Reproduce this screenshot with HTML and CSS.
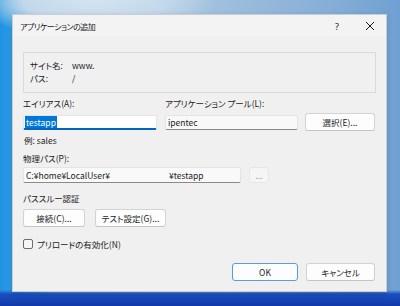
FILE: index.html
```html
<!DOCTYPE html>
<html lang="ja">
<head>
<meta charset="utf-8">
<title>アプリケーションの追加</title>
<link rel="stylesheet" href="styles.css">
</head>
<body>
<div class="dialog">
  <div class="titlebar">
    <span class="title">アプリケーションの追加</span>
    <span class="help">?</span>
    <span class="close"><svg width="10" height="10" viewBox="0 0 10 10"><path d="M1 1L9 9M9 1L1 9" stroke="#1a1a1a" stroke-width="1"/></svg></span>
  </div>
  <div class="content">
    <div class="groupbox">
      <div class="info-row"><span class="key">サイト名:</span><span>www.</span></div>
      <div class="info-row"><span class="key">パス:</span><span>/</span></div>
    </div>
    <div class="pair">
      <div class="col col-alias">
        <div class="label">エイリアス(A):</div>
        <div class="input input-focus"><span class="sel">testapp</span></div>
      </div>
      <div class="col col-pool">
        <div class="label">アプリケーション プール(L):</div>
        <div class="input">ipentec</div>
      </div>
      <button class="btn btn-select">選択(E)...</button>
    </div>
    <div class="hint">例: sales</div>
    <div class="label label-path">物理パス(P):</div>
    <div class="path-row">
      <div class="input input-path"><span class="path-a">C:¥home¥LocalUser¥</span><span>¥testapp</span></div>
      <button class="btn btn-browse" disabled>...</button>
    </div>
    <div class="label label-auth">パススルー認証</div>
    <div class="auth-row">
      <button class="btn btn-connect">接続(C)...</button>
      <button class="btn btn-test">テスト設定(G)...</button>
    </div>
    <label class="check-row"><span class="checkbox"></span><span>プリロードの有効化(N)</span></label>
    <div class="footer">
      <button class="btn btn-ok">OK</button>
      <button class="btn btn-cancel">キャンセル</button>
    </div>
  </div>
</div>
</body>
</html>
```
FILE: styles.css
```css
html, body {
  margin: 0;
  padding: 0;
}
body {
  width: 400px;
  height: 306px;
  box-sizing: border-box;
  padding: 14px 0 0 12px;
  overflow: hidden;
  font-family: "Noto Sans CJK JP", "Noto Sans", sans-serif;
  font-feature-settings: "palt";
  font-size: 8.5px;
  color: #1b1b1b;
  background:
    radial-gradient(ellipse 120px 40px at 95px 0px, #d4e4f0 0%, #c2d8ea 60%, rgba(180,208,232,0) 100%),
    linear-gradient(180deg, rgba(0,0,0,0) 0, rgba(0,0,0,0) 290px, #1a4fc0 294px, #1238a8 306px),
    linear-gradient(90deg, #1f92e4 0, #2f9de4 12px, #a9c6e0 60px, #a3c2de 200px, #86aed6 330px, #6fa0d2 400px);
}
.dialog {
  width: 375px;
  height: 278px;
  box-sizing: border-box;
  background: #f0f0f0;
  border: 1px solid #c9ced4;
  display: flex;
  flex-direction: column;
  box-shadow: 0 2px 6px rgba(0,0,0,0.15);
}
.titlebar {
  height: 22px;
  display: flex;
  align-items: center;
  padding-left: 7px;
  background: #f3f3f3;
}
.title {
  flex: 1;
  font-size: 8px;
  letter-spacing: -0.5px;
}
.help {
  width: 10px;
  text-align: center;
  font-family: "Noto Sans", sans-serif;
  font-size: 9px;
  margin-right: 23px;
}
.close {
  width: 10px;
  height: 10px;
  margin-right: 11px;
  display: flex;
}
.content {
  flex: 1;
  display: flex;
  flex-direction: column;
  padding: 0 10px 10px 10px;
}
.groupbox {
  margin-top: 15px;
  height: 41px;
  box-sizing: border-box;
  border: 1px solid #dadada;
  padding: 6px 0 0 6px;
}
.info-row {
  height: 13px;
  line-height: 13px;
  display: flex;
}
.key {
  width: 42px;
}
.pair {
  display: flex;
  align-items: flex-end;
  margin-top: 4px;
}
.col {
  display: flex;
  flex-direction: column;
}
.col-alias {
  width: 134px;
}
.col-pool {
  width: 133px;
  margin-left: 8px;
}
.label {
  height: 13px;
  line-height: 13px;
  margin-bottom: 5px;
}
.input {
  height: 15px;
  box-sizing: border-box;
  background: #f9f9f9;
  border: 1px solid #e4e4e4;
  border-bottom-color: #8a8a8a;
  border-radius: 2px;
  line-height: 13px;
  padding-left: 2px;
  font-size: 8.5px;
  white-space: nowrap;
}
.input-focus {
  background: #ffffff;
  border-bottom: 2px solid #0067c0;
  line-height: 12px;
  padding-left: 1px;
}
.sel {
  background: #0078d7;
  color: #ffffff;
  padding: 0 1px;
}
.btn {
  font-family: inherit;
  font-feature-settings: "palt";
  font-size: 8.5px;
  color: #1b1b1b;
  background: #fdfdfd;
  border: 1px solid #d3d3d3;
  border-bottom-color: #c4c4c4;
  border-radius: 3px;
  padding: 0;
  height: 18px;
  line-height: 16px;
  box-sizing: border-box;
}
.btn-select {
  width: 70px;
  margin-left: 7px;
  margin-bottom: -1px;
}
.hint {
  height: 13px;
  line-height: 13px;
  margin-top: 4px;
  padding-left: 1px;
}
.label-path {
  margin-top: 5px;
  margin-bottom: 2px;
}
.path-row {
  display: flex;
  align-items: center;
}
.input-path {
  width: 218px;
  height: 16px;
  line-height: 14px;
  display: flex;
}
.path-a {
  width: 143px;
}
.btn-browse {
  width: 20px;
  height: 16px;
  margin-left: 8px;
  background: #f5f5f5;
  border: 1px solid #e6e6e6;
  color: #a0a0a0;
  line-height: 12px;
}
.label-auth {
  margin-top: 9px;
  margin-bottom: 4px;
}
.auth-row {
  display: flex;
}
.btn-connect {
  width: 62px;
}
.btn-test {
  width: 71px;
  margin-left: 10px;
}
.check-row {
  display: flex;
  align-items: center;
  margin-top: 11px;
  height: 12px;
}
.checkbox {
  width: 10px;
  height: 10px;
  box-sizing: border-box;
  border: 1px solid #6b6b6b;
  border-radius: 2px;
  background: #f6f6f6;
  margin-right: 4px;
}
.footer {
  margin-top: auto;
  display: flex;
  justify-content: flex-end;
  margin-right: 1px;
}
.btn-ok {
  width: 66px;
  border: 1px solid #5b9bd8;
}
.btn-cancel {
  width: 69px;
  margin-left: 8px;
}
```
